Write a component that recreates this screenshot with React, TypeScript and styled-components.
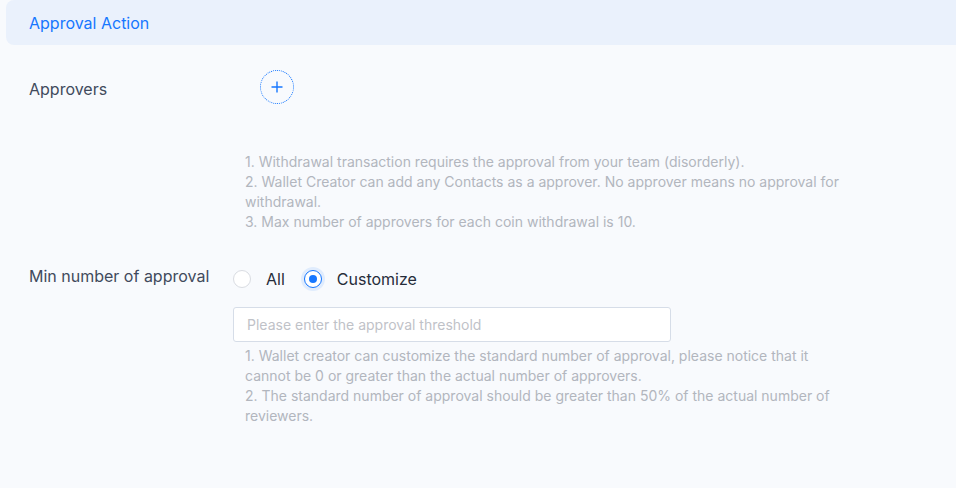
import styled, { createGlobalStyle } from "styled-components";

/*********************  ESTILOS  *********************/
const GlobalStyle = createGlobalStyle`
  html, body {
    margin: 0;
    padding: 0;
    background: #f8fafd;
    font-family: Inter, "Noto Sans", "Liberation Sans", sans-serif;
    overflow: hidden;
  }
`;

const Page = styled.div`
  width: 956px;
  height: 488px;
  padding-left: 6px;
  box-sizing: border-box;
  overflow: hidden;
`;

const Header = styled.div`
  height: 45px;
  margin-right: -12px;
  padding-left: 23px;
  display: flex;
  align-items: center;
  background: #eaf1fc;
  border-radius: 8px;
  color: #1677ff;
  font-size: 16px;
`;

const Form = styled.div`
  padding: 25px 0 0 23px;
`;

const Row = styled.div<{ $top?: number }>`
  display: grid;
  grid-template-columns: 204px 1fr;
  margin-top: ${(p) => p.$top ?? 0}px;
`;

const Label = styled.div<{ $pad: number }>`
  padding-top: ${(p) => p.$pad}px;
  font-size: 16px;
  line-height: 24px;
  color: #414a5c;
`;

const Control = styled.div`
  display: flex;
  flex-direction: column;
  align-items: flex-start;
`;

const AddButton = styled.button`
  width: 34px;
  height: 34px;
  margin-left: 27px;
  padding: 0;
  border: 1.5px dotted #1677ff;
  border-radius: 50%;
  background: transparent;
  display: flex;
  align-items: center;
  justify-content: center;
  cursor: pointer;
`;

const Help = styled.div<{ $top: number }>`
  margin-top: ${(p) => p.$top}px;
  padding-left: 12px;
  width: 640px;
  white-space: nowrap;
  font-size: 14px;
  line-height: 20px;
  color: #b2b6be;
`;

const RadioGroup = styled.div`
  height: 32px;
  display: flex;
  align-items: center;
`;

const RadioLabel = styled.label`
  display: flex;
  align-items: center;
  margin-right: 19px;
  font-size: 16px;
  color: #262c3a;
  cursor: pointer;
`;

const RadioDot = styled.span<{ $checked?: boolean }>`
  width: 18px;
  height: 18px;
  box-sizing: border-box;
  border-radius: 50%;
  margin-right: 15px;
  background: #fff;
  border: 1px solid ${(p) => (p.$checked ? "#1677ff" : "#d9dce2")};
  box-shadow: ${(p) => (p.$checked ? "0 0 0 3px rgba(22, 119, 255, 0.1)" : "none")};
  display: flex;
  align-items: center;
  justify-content: center;

  &::after {
    content: "";
    width: 8px;
    height: 8px;
    border-radius: 50%;
    background: #1677ff;
    display: ${(p) => (p.$checked ? "block" : "none")};
  }
`;

const Input = styled.input`
  margin-top: 12px;
  width: 438px;
  height: 35px;
  box-sizing: border-box;
  padding: 0 13px;
  border: 1px solid #d6dde8;
  border-radius: 3px;
  background: #fff;
  font-family: inherit;
  font-size: 14px;
  color: #262c3a;
  outline: none;

  &::placeholder {
    color: #bfc2c8;
  }
`;

/*********************  LÓGICA  *********************/
export default function App() {
  return (
    <>
      <GlobalStyle />
      <Page>
        <Header>Approval Action</Header>
        <Form>
          <Row>
            <Label $pad={7}>Approvers</Label>
            <Control>
              <AddButton aria-label="add approver">
                <svg width="14" height="14" viewBox="0 0 14 14">
                  <path d="M7 1.5v11M1.5 7h11" stroke="#1677ff" strokeWidth="1.4" />
                </svg>
              </AddButton>
              <Help $top={48}>
                1. Withdrawal transaction requires the approval from your team (disorderly).
                <br />
                2. Wallet Creator can add any Contacts as a approver. No approver means no approval for
                <br />
                withdrawal.
                <br />
                3. Max number of approvers for each coin withdrawal is 10.
              </Help>
            </Control>
          </Row>
          <Row $top={31}>
            <Label $pad={1}>Min number of approval</Label>
            <Control>
              <RadioGroup>
                <RadioLabel>
                  <RadioDot />
                  All
                </RadioLabel>
                <RadioLabel>
                  <RadioDot $checked />
                  Customize
                </RadioLabel>
              </RadioGroup>
              <Input placeholder="Please enter the approval threshold" />
              <Help $top={4}>
                1. Wallet creator can customize the standard number of approval, please notice that it
                <br />
                cannot be 0 or greater than the actual number of approvers.
                <br />
                2. The standard number of approval should be greater than 50% of the actual number of
                <br />
                reviewers.
              </Help>
            </Control>
          </Row>
        </Form>
      </Page>
    </>
  );
}
